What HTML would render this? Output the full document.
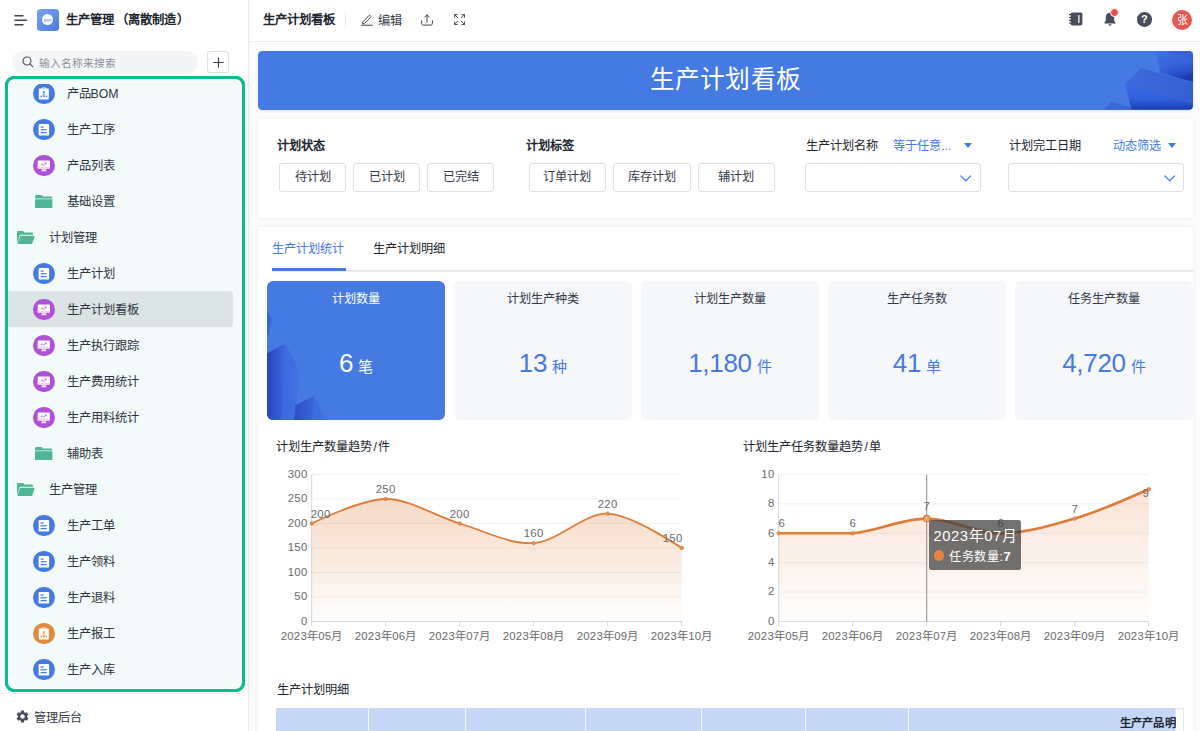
<!DOCTYPE html>
<html lang="zh-CN"><head><meta charset="utf-8"><title>生产计划看板</title>
<style>
*{box-sizing:border-box;margin:0;padding:0}
html,body{width:1200px;height:731px;overflow:hidden;background:#fff}
body{font-family:"Liberation Sans",sans-serif;font-size:12px;color:#2d3440;position:relative}
.abs{position:absolute}
.t{position:absolute;white-space:nowrap;line-height:16px;height:16px;text-align:justify;text-align-last:justify}
.jc{display:inline-block;white-space:nowrap;text-align:justify;text-align-last:justify;vertical-align:top}
#side{position:absolute;left:0;top:0;width:249px;height:731px;background:#fff;border-right:1px solid #e6e8ec}
#main{position:absolute;left:249px;top:0;width:951px;height:731px;background:#fcfcfd;overflow:hidden}
#topbar{position:absolute;left:0;top:0;width:951px;height:41.600px;background:#fff;border-bottom:1px solid #ececef}
.card{position:absolute;background:#fff;box-shadow:0 0 5px rgba(40,50,90,.09)}
.btn{position:absolute;top:163px;height:28.5px;border:1px solid #dde0e6;border-radius:3px;background:#fff;text-align:center;line-height:27px;font-size:12.2px;color:#333a46;white-space:nowrap;overflow:hidden}
.sel{position:absolute;top:163.300px;height:29px;width:175.500px;border:1px solid #dcdfe5;border-radius:3px;background:#fff}
.kpi{position:absolute;top:280.5px;width:178px;height:139px;border-radius:6px;background:#f6f7fb;overflow:hidden}
.kpi .h{position:absolute;left:0;top:10.300px;width:178px;text-align:center;font-size:12.2px;line-height:16px;white-space:nowrap;color:#333a46}
.kpi .n{position:absolute;left:0;top:63.800px;width:178px;height:38px;text-align:center;white-space:nowrap;color:#447ae1;line-height:38px;font-size:26px;letter-spacing:-.3px}
.kpi .n small{display:inline-block;width:15px;text-align:center;font-size:15px;margin-left:5px;letter-spacing:0}
.item{position:absolute;left:0;width:248px;height:36px}
.item .lb{position:absolute;top:11px;line-height:16px;height:16px;font-size:12.3px;white-space:nowrap;color:#2d3440;text-align:justify;text-align-last:justify}
.ic{position:absolute;left:33.3px;top:7.5px;width:21.6px;height:21.6px;border-radius:50%}
</style></head>
<body>
<div id="side">
<svg class="abs" style="left:14px;top:13.5px" width="14" height="12" viewBox="0 0 14 12"><path d="M1 1.700h8M1 6.200h11.600M1 10.700h8" stroke="#3c4250" stroke-width="1.400" stroke-linecap="round" fill="none"/></svg>
<div class="abs" style="left:37px;top:9px;width:21.5px;height:21.5px;border-radius:3.5px;background:linear-gradient(135deg,#7aa2ee 0%,#4a7de2 100%)"><div class="abs" style="left:5.200px;top:5.200px;width:11px;height:11px;border-radius:50%;background:#fff"></div><div class="abs" style="left:5.200px;top:8.600px;width:11px;height:5px;line-height:5px;font-size:4px;font-weight:bold;color:#8fb0ef;text-align:center;letter-spacing:-.1px">ERP</div></div>
<div class="t" style="width:123.55px;left:65.500px;top:12.400px;font-size:12.300px;font-weight:bold;color:#20252e">生产管理<span style="margin-left:2px">（</span>离散制造<span style="margin-left:1.500px">）</span></div>
<div class="abs" style="left:12px;top:50.500px;width:186px;height:23px;border-radius:11.500px;background:#f4f5f7"></div>
<svg class="abs" style="left:21.700px;top:56px" width="12" height="12" viewBox="0 0 13 13"><circle cx="5.400" cy="5.400" r="4.300" stroke="#4a505c" stroke-width="1.200" fill="none"/><path d="M8.600 8.600l3.200 3.200" stroke="#4a505c" stroke-width="1.200" stroke-linecap="round"/></svg>
<div class="t" style="width:77.05px;left:38.800px;top:55px;font-size:10.700px;color:#8a8f99">输入名称来搜索</div>
<div class="abs" style="left:207px;top:51px;width:21.500px;height:22px;border:1px solid #dcdfe4;border-radius:3px;background:#fff"></div>
<svg class="abs" style="left:212.500px;top:56.500px" width="11" height="11" viewBox="0 0 11 11"><path d="M5.500 .8v9.400M.8 5.500h9.400" stroke="#3c4250" stroke-width="1.200" stroke-linecap="round"/></svg>
<div class="abs" style="left:5px;top:76px;width:239.800px;height:616.200px;border:3px solid #09bd8e;border-radius:9px;background:#fbfefd"></div>
<div class="abs" style="left:9.500px;top:80.600px;width:230.800px;height:607px;border-radius:5px;background:#f2fbf9"></div>
<div class="item" style="top:75.3px"><svg class="ic" viewBox="0 0 22 22" style="background:#447ae1"><rect x="5.900" y="5.500" width="10.200" height="11.300" rx="1" fill="#fff"/><rect x="8.800" y="4.500" width="4.400" height="1.800" rx=".6" fill="#fff"/><rect x="9.500" y="5.300" width="3" height=".8" rx=".3" fill="#447ae1" opacity=".5"/><rect x="10.100" y="8.300" width="1.800" height="1.800" rx=".3" fill="#447ae1"/><path d="M11 10l-2.600 3.600h5.200z" fill="#447ae1" opacity=".35"/><path d="M11 10v3.600" stroke="#447ae1" stroke-width=".8" opacity=".6"/><rect x="7.600" y="13.100" width="1.500" height="1.500" rx=".3" fill="#447ae1"/><rect x="10.250" y="13.100" width="1.500" height="1.500" rx=".3" fill="#447ae1"/><rect x="12.900" y="13.100" width="1.500" height="1.500" rx=".3" fill="#447ae1"/></svg><div class="lb" style="width:52.07px;left:66.500px">产品BOM</div></div>
<div class="item" style="top:111.3px"><svg class="ic" viewBox="0 0 22 22" style="background:#447ae1"><rect x="5.700" y="5" width="10.700" height="11.700" rx="1.200" fill="#fff"/><rect x="7.700" y="7.600" width="3.100" height="1.250" fill="#447ae1"/><rect x="7.700" y="10.400" width="6.300" height="1.250" fill="#447ae1"/><rect x="7.700" y="13.200" width="6.300" height="1.250" fill="#447ae1"/></svg><div class="lb" style="width:48.05px;left:66.500px">生产工序</div></div>
<div class="item" style="top:147.3px"><svg class="ic" viewBox="0 0 22 22" style="background:#b04fd8"><rect x="4.800" y="5.600" width="12.400" height="8.400" rx=".9" fill="#fff"/><rect x="4.800" y="12" width="12.400" height="2" fill="#ecd3f6"/><path d="M9.300 14h3.400l.5 1.600H8.800z" fill="#ecd3f6"/><rect x="8.300" y="15.500" width="5.400" height="1" rx=".3" fill="#fff"/><path d="M8 10.300c.8-1.300 1.500-1.300 2.100-.5s1.400.6 2.300-.9" stroke="#b04fd8" stroke-width=".9" fill="none"/><circle cx="13" cy="8.500" r=".9" fill="#b04fd8"/></svg><div class="lb" style="width:48.05px;left:66.500px">产品列表</div></div>
<div class="item" style="top:183.3px"><svg class="abs" style="left:35.400px;top:11.600px" width="17.400" height="13.600" viewBox="0 0 17.4 13.6"><path d="M1.500 0h4.600c.5 0 .9.200 1.200.6l.7.900h7.900c.8 0 1.500.7 1.500 1.500v.5H0v-2C0 .7.700 0 1.500 0z" fill="#4fb595"/><path d="M0 4.300h17.400v7.600c0 .9-.8 1.700-1.700 1.700H1.700c-.9 0-1.700-.8-1.700-1.700z" fill="#4fb595"/></svg><div class="lb" style="width:48.05px;left:66.500px">基础设置</div></div>
<div class="item" style="top:219.3px"><svg class="abs" style="left:17.4px;top:12px" width="17.4" height="13" viewBox="0 0 17.4 13"><path d="M1.3 0h4.2c.5 0 .9.2 1.200.6l.6.8h7.400c.7 0 1.300.6 1.300 1.300v1.100H3.900c-.7 0-1.300.4-1.500 1.100L.3 11.500C.1 11.300 0 11 0 10.700V1.300C0 .6.6 0 1.300 0z" fill="#4fb595"/><path d="M4.200 4.700h12.300c.7 0 1.100.6.900 1.200l-2 6.100c-.2.600-.7 1-1.300 1H1.500c-.6 0-1-.5-.8-1.100l2.100-6.200c.2-.6.700-1 1.400-1z" fill="#4fb595"/></svg><div class="lb" style="width:48.05px;left:49px">计划管理</div></div>
<div class="item" style="top:255.3px"><svg class="ic" viewBox="0 0 22 22" style="background:#447ae1"><rect x="5.700" y="5" width="10.700" height="11.700" rx="1.200" fill="#fff"/><rect x="7.700" y="7.600" width="3.100" height="1.250" fill="#447ae1"/><rect x="7.700" y="10.400" width="6.300" height="1.250" fill="#447ae1"/><rect x="7.700" y="13.200" width="6.300" height="1.250" fill="#447ae1"/></svg><div class="lb" style="width:48.05px;left:66.500px">生产计划</div></div>
<div class="abs" style="left:8px;top:291.0px;width:225px;height:36px;background:#dbe4e4;border-radius:0 4px 4px 0"></div><div class="item" style="top:291.3px"><svg class="ic" viewBox="0 0 22 22" style="background:#b04fd8"><rect x="4.800" y="5.600" width="12.400" height="8.400" rx=".9" fill="#fff"/><rect x="4.800" y="12" width="12.400" height="2" fill="#ecd3f6"/><path d="M9.300 14h3.400l.5 1.600H8.800z" fill="#ecd3f6"/><rect x="8.300" y="15.500" width="5.400" height="1" rx=".3" fill="#fff"/><path d="M8 10.300c.8-1.300 1.500-1.300 2.100-.5s1.400.6 2.300-.9" stroke="#b04fd8" stroke-width=".9" fill="none"/><circle cx="13" cy="8.500" r=".9" fill="#b04fd8"/></svg><div class="lb" style="width:72.05px;left:66.500px">生产计划看板</div></div>
<div class="item" style="top:327.3px"><svg class="ic" viewBox="0 0 22 22" style="background:#b04fd8"><rect x="4.800" y="5.600" width="12.400" height="8.400" rx=".9" fill="#fff"/><rect x="4.800" y="12" width="12.400" height="2" fill="#ecd3f6"/><path d="M9.300 14h3.400l.5 1.600H8.800z" fill="#ecd3f6"/><rect x="8.300" y="15.500" width="5.400" height="1" rx=".3" fill="#fff"/><path d="M8 10.300c.8-1.300 1.500-1.300 2.100-.5s1.400.6 2.300-.9" stroke="#b04fd8" stroke-width=".9" fill="none"/><circle cx="13" cy="8.500" r=".9" fill="#b04fd8"/></svg><div class="lb" style="width:72.05px;left:66.500px">生产执行跟踪</div></div>
<div class="item" style="top:363.3px"><svg class="ic" viewBox="0 0 22 22" style="background:#b04fd8"><rect x="4.800" y="5.600" width="12.400" height="8.400" rx=".9" fill="#fff"/><rect x="4.800" y="12" width="12.400" height="2" fill="#ecd3f6"/><path d="M9.300 14h3.400l.5 1.600H8.800z" fill="#ecd3f6"/><rect x="8.300" y="15.500" width="5.400" height="1" rx=".3" fill="#fff"/><path d="M8 10.300c.8-1.300 1.500-1.300 2.100-.5s1.400.6 2.300-.9" stroke="#b04fd8" stroke-width=".9" fill="none"/><circle cx="13" cy="8.500" r=".9" fill="#b04fd8"/></svg><div class="lb" style="width:72.05px;left:66.500px">生产费用统计</div></div>
<div class="item" style="top:399.3px"><svg class="ic" viewBox="0 0 22 22" style="background:#b04fd8"><rect x="4.800" y="5.600" width="12.400" height="8.400" rx=".9" fill="#fff"/><rect x="4.800" y="12" width="12.400" height="2" fill="#ecd3f6"/><path d="M9.300 14h3.400l.5 1.600H8.800z" fill="#ecd3f6"/><rect x="8.300" y="15.500" width="5.400" height="1" rx=".3" fill="#fff"/><path d="M8 10.300c.8-1.300 1.500-1.300 2.100-.5s1.400.6 2.300-.9" stroke="#b04fd8" stroke-width=".9" fill="none"/><circle cx="13" cy="8.500" r=".9" fill="#b04fd8"/></svg><div class="lb" style="width:72.05px;left:66.500px">生产用料统计</div></div>
<div class="item" style="top:435.3px"><svg class="abs" style="left:35.400px;top:11.600px" width="17.400" height="13.600" viewBox="0 0 17.4 13.6"><path d="M1.500 0h4.600c.5 0 .9.200 1.200.6l.7.900h7.900c.8 0 1.500.7 1.500 1.500v.5H0v-2C0 .7.700 0 1.500 0z" fill="#4fb595"/><path d="M0 4.300h17.400v7.600c0 .9-.8 1.700-1.700 1.700H1.700c-.9 0-1.700-.8-1.700-1.700z" fill="#4fb595"/></svg><div class="lb" style="width:36.05px;left:66.500px">辅助表</div></div>
<div class="item" style="top:471.3px"><svg class="abs" style="left:17.4px;top:12px" width="17.4" height="13" viewBox="0 0 17.4 13"><path d="M1.3 0h4.2c.5 0 .9.2 1.200.6l.6.8h7.400c.7 0 1.300.6 1.300 1.300v1.100H3.900c-.7 0-1.300.4-1.500 1.100L.3 11.500C.1 11.300 0 11 0 10.700V1.300C0 .6.6 0 1.300 0z" fill="#4fb595"/><path d="M4.200 4.700h12.300c.7 0 1.100.6.900 1.200l-2 6.100c-.2.600-.7 1-1.300 1H1.500c-.6 0-1-.5-.8-1.100l2.100-6.200c.2-.6.700-1 1.400-1z" fill="#4fb595"/></svg><div class="lb" style="width:48.05px;left:49px">生产管理</div></div>
<div class="item" style="top:507.3px"><svg class="ic" viewBox="0 0 22 22" style="background:#447ae1"><rect x="5.700" y="5" width="10.700" height="11.700" rx="1.200" fill="#fff"/><rect x="7.700" y="7.600" width="3.100" height="1.250" fill="#447ae1"/><rect x="7.700" y="10.400" width="6.300" height="1.250" fill="#447ae1"/><rect x="7.700" y="13.200" width="6.300" height="1.250" fill="#447ae1"/></svg><div class="lb" style="width:48.05px;left:66.500px">生产工单</div></div>
<div class="item" style="top:543.3px"><svg class="ic" viewBox="0 0 22 22" style="background:#447ae1"><rect x="5.700" y="5" width="10.700" height="11.700" rx="1.200" fill="#fff"/><rect x="7.700" y="7.600" width="3.100" height="1.250" fill="#447ae1"/><rect x="7.700" y="10.400" width="6.300" height="1.250" fill="#447ae1"/><rect x="7.700" y="13.200" width="6.300" height="1.250" fill="#447ae1"/></svg><div class="lb" style="width:48.05px;left:66.500px">生产领料</div></div>
<div class="item" style="top:579.3px"><svg class="ic" viewBox="0 0 22 22" style="background:#447ae1"><rect x="5.700" y="5" width="10.700" height="11.700" rx="1.200" fill="#fff"/><rect x="7.700" y="7.600" width="3.100" height="1.250" fill="#447ae1"/><rect x="7.700" y="10.400" width="6.300" height="1.250" fill="#447ae1"/><rect x="7.700" y="13.200" width="6.300" height="1.250" fill="#447ae1"/></svg><div class="lb" style="width:48.05px;left:66.500px">生产退料</div></div>
<div class="item" style="top:615.3px"><svg class="ic" viewBox="0 0 22 22" style="background:#e08b3d"><rect x="5.900" y="5.500" width="10.200" height="11.300" rx="1" fill="#fff"/><rect x="8.800" y="4.500" width="4.400" height="1.800" rx=".6" fill="#fff"/><rect x="9.500" y="5.300" width="3" height=".8" rx=".3" fill="#e08b3d" opacity=".5"/><rect x="10.100" y="8.300" width="1.800" height="1.800" rx=".3" fill="#e08b3d"/><path d="M11 10l-2.600 3.600h5.200z" fill="#e08b3d" opacity=".35"/><path d="M11 10v3.600" stroke="#e08b3d" stroke-width=".8" opacity=".6"/><rect x="7.600" y="13.100" width="1.500" height="1.500" rx=".3" fill="#e08b3d"/><rect x="10.250" y="13.100" width="1.500" height="1.500" rx=".3" fill="#e08b3d"/><rect x="12.900" y="13.100" width="1.500" height="1.500" rx=".3" fill="#e08b3d"/></svg><div class="lb" style="width:48.05px;left:66.500px">生产报工</div></div>
<div class="item" style="top:651.3px"><svg class="ic" viewBox="0 0 22 22" style="background:#447ae1"><rect x="5.700" y="5" width="10.700" height="11.700" rx="1.200" fill="#fff"/><rect x="7.700" y="7.600" width="3.100" height="1.250" fill="#447ae1"/><rect x="7.700" y="10.400" width="6.300" height="1.250" fill="#447ae1"/><rect x="7.700" y="13.200" width="6.300" height="1.250" fill="#447ae1"/></svg><div class="lb" style="width:48.05px;left:66.500px">生产入库</div></div>
<div class="abs" style="left:9.500px;top:80.600px;width:230.800px;height:3.600px;background:#f2fbf9;border-radius:5px 5px 0 0"></div>
<div class="abs" style="left:5px;top:76px;width:239.800px;height:616.200px;border:3px solid #09bd8e;border-radius:9px"></div>
<div class="abs" style="left:0;top:693px;width:248px;height:1px;background:#ebecef"></div>
<svg class="abs" style="left:15px;top:708.800px" width="15" height="15" viewBox="0 0 24 24"><path fill="#474d59" d="M19.140 12.940c.040-.3.060-.610.060-.940 0-.320-.020-.640-.070-.940l2.030-1.580a.490.490 0 0 0 .120-.610l-1.920-3.320a.488.488 0 0 0-.590-.220l-2.390.960c-.5-.380-1.030-.7-1.620-.940l-.360-2.540a.484.484 0 0 0-.480-.410h-3.840c-.240 0-.430.170-.470.410l-.360 2.540c-.590.240-1.130.570-1.620.940l-2.390-.960c-.220-.080-.470 0-.590.220L2.740 8.870c-.120.210-.080.470.120.610l2.030 1.580c-.050.300-.090.630-.090.940s.020.640.070.940l-2.030 1.580a.490.490 0 0 0-.120.610l1.920 3.320c.120.220.370.290.590.220l2.390-.960c.5.380 1.030.7 1.620.940l.360 2.540c.050.240.240.410.480.410h3.840c.240 0 .440-.170.470-.410l.360-2.540c.590-.240 1.130-.560 1.620-.940l2.390.960c.220.080.470 0 .590-.220l1.920-3.320c.120-.220.070-.470-.120-.610l-2.010-1.580zM12 15.600c-1.980 0-3.600-1.620-3.600-3.600s1.620-3.600 3.600-3.600 3.600 1.620 3.600 3.600-1.620 3.600-3.600 3.600z"/></svg>
<div class="t" style="width:48.05px;left:34px;top:709.600px;font-size:12.200px;color:#333a46">管理后台</div>
</div>
<div id="main">
<div id="topbar"></div>
<div class="t" style="width:72.05px;left:14.2px;top:12px;font-size:12.400px;font-weight:bold;color:#20252e">生产计划看板</div>
<div class="abs" style="left:96.0px;top:12px;width:1px;height:16px;background:#e8eaed"></div>
<svg class="abs" style="left:111.5px;top:13.500px" width="12" height="12" viewBox="0 0 12 12"><path d="M1.800 7.900L8 1.500a.800.800 0 0 1 1.150 0l.55.550a.800.800 0 0 1 0 1.150L3.500 9.500l-2 .3z" stroke="#3c4250" stroke-width=".95" fill="none" stroke-linejoin="round"/><path d="M.5 11.200h10.800" stroke="#3c4250" stroke-width="1" stroke-linecap="round"/></svg>
<div class="t" style="width:24.05px;left:129.3px;top:12.700px;font-size:12.200px;color:#333a46">编辑</div>
<svg class="abs" style="left:172.2px;top:13.800px" width="12" height="12" viewBox="0 0 12 12"><path d="M.6 6.800v2.600c0 1 .7 1.700 1.700 1.700h7.400c1 0 1.700-.7 1.700-1.700V6.800M6 8.200V1M3.700 3.100L6 .8l2.300 2.300" stroke="#3c4250" stroke-width="1" fill="none" stroke-linecap="round" stroke-linejoin="round"/></svg>
<svg class="abs" style="left:204.6px;top:14px" width="11.200" height="11.200" viewBox="0 0 12 12"><path d="M.7 3.600V.7h2.900M.9.900l3.300 3.300M8.400.7h2.900v2.900M11.100.9L7.800 4.200M11.300 8.400v2.900H8.400M11.100 11.100L7.800 7.800M3.600 11.300H.7V8.400M.9 11.100l3.300-3.300" stroke="#3c4250" stroke-width="1" fill="none" stroke-linecap="round" stroke-linejoin="round"/></svg>
<svg class="abs" style="left:820.0px;top:12.100px" width="14" height="14" viewBox="0 0 14 14"><rect x="1.600" y=".4" width="11.800" height="13.200" rx="1.800" fill="#474d59"/><rect x="9.200" y="3" width="1.300" height="8" rx=".4" fill="#fff"/><path d="M.3 2.600h2M.3 5.500h2M.3 8.400h2M.3 11.300h2" stroke="#474d59" stroke-width="1.100" stroke-linecap="round"/></svg>
<svg class="abs" style="left:855.3px;top:12.200px" width="12" height="14.500" viewBox="0 0 12 14.500"><path d="M6 .8c-2.500 0-4.200 1.900-4.200 4.400v3.600L.5 10.600v.8h11v-.8l-1.300-1.800V5.200C10.200 2.700 8.500.8 6 .8z" fill="#474d59"/><path d="M4.500 12.200a1.500 1.500 0 0 0 3 0z" fill="#474d59"/></svg>
<div class="abs" style="left:861.2px;top:8.400px;width:8.800px;height:8.800px;border-radius:50%;background:#e8524a;border:1px solid #fff"></div>
<div class="abs" style="left:888.0px;top:12.100px;width:14.600px;height:14.600px;border-radius:50%;background:#474d59;color:#fff;font-size:11px;font-weight:bold;text-align:center;line-height:15px">?</div>
<div class="abs" style="left:923.0px;top:9.700px;width:20px;height:20px;border-radius:50%;background:#e5574f;color:#fff;font-size:11px;text-align:center;line-height:20px;overflow:hidden">张</div>
<div class="abs" style="left:9.0px;top:51px;width:935px;height:58.500px;border-radius:4.500px;background:#447ae1;overflow:hidden;box-shadow:0 1px 3px rgba(40,60,110,.12)"><svg class="abs" style="right:0;top:0" width="120" height="58.500" viewBox="0 0 120 58.500"><defs><linearGradient id="bg1" gradientUnits="userSpaceOnUse" x1="96" y1="0" x2="104" y2="29"><stop offset="0" stop-color="#3e6fe2"/><stop offset=".55" stop-color="#3461d8"/><stop offset=".88" stop-color="#2549c2"/><stop offset="1" stop-color="#1b3aac"/></linearGradient><linearGradient id="bg2" x1="0" y1="0" x2="0" y2="1"><stop offset="0" stop-color="#3a6be4"/><stop offset=".6" stop-color="#2f5fdc"/><stop offset=".9" stop-color="#2246c0"/><stop offset="1" stop-color="#1b3bb0"/></linearGradient><linearGradient id="bg3" x1="0" y1="0" x2="1" y2="0"><stop offset="0" stop-color="#3b6adb"/><stop offset="1" stop-color="#3560d2"/></linearGradient></defs><path d="M82.600 0H120V31L87.400 21.800z" fill="url(#bg1)"/><path d="M93 0h27v8.300z" fill="#3560d0" opacity=".75"/><path d="M68.200 17L120 31.800V52.400L52 33.300z" fill="url(#bg3)"/><path d="M52 33.300L120 52.400V58.500H58.500z" fill="url(#bg2)"/><path d="M38.500 50.500L58.200 56.200l.5 2.300H31z" fill="#3a68d7"/></svg><div class="abs" style="left:0;top:12.200px;width:935px;text-align:center;font-size:24.800px;line-height:34px;color:#fff;white-space:nowrap"><span class="jc" style="width:151.86px;letter-spacing:.3px">生产计划看板</span></div></div>
<div class="card" style="left:9.0px;top:118.500px;width:934.500px;height:99.500px"></div>
<div class="t" style="width:48.05px;left:27.5px;top:137.500px;font-size:12.200px;font-weight:bold;color:#20252e">计划状态</div>
<div class="btn" style="left:30.1px;width:66.900px"><span class="jc" style="width:36.05px;">待计划</span></div>
<div class="btn" style="left:104.1px;width:66.900px"><span class="jc" style="width:36.05px;">已计划</span></div>
<div class="btn" style="left:178.1px;width:66.900px"><span class="jc" style="width:36.05px;">已完结</span></div>
<div class="t" style="width:48.05px;left:276.5px;top:137.500px;font-size:12.200px;font-weight:bold;color:#20252e">计划标签</div>
<div class="btn" style="left:279.5px;width:77.500px"><span class="jc" style="width:48.05px;">订单计划</span></div>
<div class="btn" style="left:364.1px;width:77.500px"><span class="jc" style="width:48.05px;">库存计划</span></div>
<div class="btn" style="left:448.7px;width:77.500px"><span class="jc" style="width:36.05px;">辅计划</span></div>
<div class="t" style="width:72.05px;left:557.0px;top:137.500px;font-size:12.200px;color:#20252e">生产计划名称</div>
<div class="t" style="width:58.22px;left:644.3px;top:137.500px;font-size:12.200px;color:#447ae1">等于任意...</div>
<div class="abs" style="left:715.1px;top:143.400px;border:4.900px solid transparent;border-top:5.800px solid #447ae1;border-bottom:0"></div>
<div class="sel" style="left:556.3px"></div>
<svg class="abs" style="left:710.7px;top:175.300px" width="11.500" height="7" viewBox="0 0 11.500 7"><path d="M.8.900l4.950 4.900L10.700.9" stroke="#447ae1" stroke-width="1.200" fill="none" stroke-linecap="round" stroke-linejoin="round"/></svg>
<div class="t" style="width:72.05px;left:760.0px;top:137.500px;font-size:12.200px;color:#20252e">计划完工日期</div>
<div class="t" style="width:48.05px;left:863.5px;top:137.500px;font-size:12.200px;color:#447ae1">动态筛选</div>
<div class="abs" style="left:918.6px;top:143.400px;border:4.900px solid transparent;border-top:5.800px solid #447ae1;border-bottom:0"></div>
<div class="sel" style="left:759.3px"></div>
<svg class="abs" style="left:914.7px;top:175.300px" width="11.500" height="7" viewBox="0 0 11.500 7"><path d="M.8.900l4.950 4.900L10.700.9" stroke="#447ae1" stroke-width="1.200" fill="none" stroke-linecap="round" stroke-linejoin="round"/></svg>
<div class="card" style="left:9.0px;top:226.500px;width:934.500px;height:520px"></div>
<div class="t" style="width:72.05px;left:23.0px;top:241px;font-size:12.200px;color:#447ae1">生产计划统计</div>
<div class="t" style="width:72.05px;left:124.0px;top:241px;font-size:12.200px;color:#20252e">生产计划明细</div>
<div class="abs" style="left:23.0px;top:270.300px;width:921px;height:1.300px;background:#e9eaee"></div>
<div class="abs" style="left:23.0px;top:268.300px;width:74px;height:2.800px;background:#447ae1"></div>
<div class="kpi" style="left:18.0px;background:#447ae1"><svg class="abs" style="left:0;top:0" width="178" height="139" viewBox="0 0 178 139"><defs><linearGradient id="kg1" x1="0" y1="0" x2="1" y2="0"><stop offset="0" stop-color="#2646be"/><stop offset="1" stop-color="#3b69dc"/></linearGradient><linearGradient id="kg3" x1="0" y1="0" x2="1" y2="0"><stop offset="0" stop-color="#2a4cc4"/><stop offset="1" stop-color="#3a66da"/></linearGradient><linearGradient id="kg2" x1="0" y1="0" x2="1" y2="0"><stop offset="0" stop-color="#3b6bde"/><stop offset="1" stop-color="#4072e0"/></linearGradient></defs><path d="M0 29l4.500 8.700L1.800 53.700H0z" fill="#3864d6"/><path d="M0 72.200L18.300 62.400 15.200 139H0z" fill="url(#kg1)"/><path d="M18.300 62.400L32.200 89.600 28.500 139H15.200z" fill="url(#kg2)"/><path d="M28.500 123.900L47 114.900 45.500 139H27.400z" fill="url(#kg3)"/><path d="M47 114.900L59.300 139H45.500z" fill="url(#kg2)"/></svg><div class="h" style="color:#fff"><span class="jc" style="width:48.05px;">计划数量</span></div><div class="n" style="color:#fff">6<small>笔</small></div></div>
<div class="kpi" style="left:205.0px"><div class="h"><span class="jc" style="width:72.05px;">计划生产种类</span></div><div class="n">13<small>种</small></div></div>
<div class="kpi" style="left:392.0px"><div class="h"><span class="jc" style="width:72.05px;">计划生产数量</span></div><div class="n">1,180<small>件</small></div></div>
<div class="kpi" style="left:579.0px"><div class="h"><span class="jc" style="width:60.05px;">生产任务数</span></div><div class="n">41<small>单</small></div></div>
<div class="kpi" style="left:766.0px"><div class="h"><span class="jc" style="width:72.05px;">任务生产数量</span></div><div class="n">4,720<small>件</small></div></div>
<div class="t" style="width:114.22px;left:27.0px;top:439px;font-size:12.200px;color:#20252e">计划生产数量趋势<span style="margin:0 1.400px">/</span>件</div>
<svg class="abs" style="left:0;top:0" width="951" height="731" viewBox="249 0 951 731" font-family="Liberation Sans, sans-serif"><defs><linearGradient id="ga" x1="0" y1="0" x2="0" y2="1"><stop offset="0" stop-color="#df7b37" stop-opacity=".29"/><stop offset="1" stop-color="#df7b37" stop-opacity=".012"/></linearGradient></defs><text x="307.6" y="624.7" text-anchor="end" font-size="11.400" fill="#6a6a6a" letter-spacing=".3">0</text><path d="M311.7 597.0H681.7" stroke="#f1f1f1" stroke-width="1"/><text x="307.6" y="600.2" text-anchor="end" font-size="11.400" fill="#6a6a6a" letter-spacing=".3">50</text><path d="M311.7 572.5H681.7" stroke="#f1f1f1" stroke-width="1"/><text x="307.6" y="575.7" text-anchor="end" font-size="11.400" fill="#6a6a6a" letter-spacing=".3">100</text><path d="M311.7 548.0H681.7" stroke="#f1f1f1" stroke-width="1"/><text x="307.6" y="551.2" text-anchor="end" font-size="11.400" fill="#6a6a6a" letter-spacing=".3">150</text><path d="M311.7 523.5H681.7" stroke="#f1f1f1" stroke-width="1"/><text x="307.6" y="526.7" text-anchor="end" font-size="11.400" fill="#6a6a6a" letter-spacing=".3">200</text><path d="M311.7 499.0H681.7" stroke="#f1f1f1" stroke-width="1"/><text x="307.6" y="502.2" text-anchor="end" font-size="11.400" fill="#6a6a6a" letter-spacing=".3">250</text><path d="M311.7 474.5H681.7" stroke="#f1f1f1" stroke-width="1"/><text x="307.6" y="477.7" text-anchor="end" font-size="11.400" fill="#6a6a6a" letter-spacing=".3">300</text><path d="M311.70 523.50 C311.70 523.50 361.28 499.00 385.70 499.00 C410.12 499.00 435.06 516.16 459.70 523.50 C483.90 530.71 509.76 544.69 533.70 543.10 C558.60 541.45 583.57 512.90 607.70 513.70 C632.41 514.52 681.70 548.00 681.70 548.00 L681.7 621.5 L311.7 621.5 Z" fill="url(#ga)"/><path d="M311.7 474.5V621.5" stroke="#d6d7d9" stroke-width="1"/><path d="M311.7 621.5H681.7" stroke="#d6d7d9" stroke-width="1"/><path d="M311.7 621.5v4.500" stroke="#d6d7d9" stroke-width="1"/><text x="311.7" y="639.9" text-anchor="middle" font-size="11.400" fill="#6a6a6a" letter-spacing=".25" textLength="62.02" lengthAdjust="spacing">2023年05月</text><path d="M385.7 621.5v4.500" stroke="#d6d7d9" stroke-width="1"/><text x="385.7" y="639.9" text-anchor="middle" font-size="11.400" fill="#6a6a6a" letter-spacing=".25" textLength="62.02" lengthAdjust="spacing">2023年06月</text><path d="M459.7 621.5v4.500" stroke="#d6d7d9" stroke-width="1"/><text x="459.7" y="639.9" text-anchor="middle" font-size="11.400" fill="#6a6a6a" letter-spacing=".25" textLength="62.02" lengthAdjust="spacing">2023年07月</text><path d="M533.7 621.5v4.500" stroke="#d6d7d9" stroke-width="1"/><text x="533.7" y="639.9" text-anchor="middle" font-size="11.400" fill="#6a6a6a" letter-spacing=".25" textLength="62.02" lengthAdjust="spacing">2023年08月</text><path d="M607.7 621.5v4.500" stroke="#d6d7d9" stroke-width="1"/><text x="607.7" y="639.9" text-anchor="middle" font-size="11.400" fill="#6a6a6a" letter-spacing=".25" textLength="62.02" lengthAdjust="spacing">2023年09月</text><path d="M681.7 621.5v4.500" stroke="#d6d7d9" stroke-width="1"/><text x="681.7" y="639.9" text-anchor="middle" font-size="11.400" fill="#6a6a6a" letter-spacing=".25" textLength="62.02" lengthAdjust="spacing">2023年10月</text><path d="M311.70 523.50 C311.70 523.50 361.28 499.00 385.70 499.00 C410.12 499.00 435.06 516.16 459.70 523.50 C483.90 530.71 509.76 544.69 533.70 543.10 C558.60 541.45 583.57 512.90 607.70 513.70 C632.41 514.52 681.70 548.00 681.70 548.00" stroke="#df7b37" stroke-width="1.8" fill="none" stroke-linejoin="round"/><circle cx="311.7" cy="523.5" r="1.700" fill="#e8935a" stroke="#df7b37" stroke-width=".9"/><text x="320.7" y="517.5" text-anchor="middle" font-size="11.400" fill="#6a6a6a" letter-spacing=".3">200</text><circle cx="385.7" cy="499.0" r="1.700" fill="#e8935a" stroke="#df7b37" stroke-width=".9"/><text x="385.7" y="493.0" text-anchor="middle" font-size="11.400" fill="#6a6a6a" letter-spacing=".3">250</text><circle cx="459.7" cy="523.5" r="1.700" fill="#e8935a" stroke="#df7b37" stroke-width=".9"/><text x="459.7" y="517.5" text-anchor="middle" font-size="11.400" fill="#6a6a6a" letter-spacing=".3">200</text><circle cx="533.7" cy="543.1" r="1.700" fill="#e8935a" stroke="#df7b37" stroke-width=".9"/><text x="533.7" y="537.1" text-anchor="middle" font-size="11.400" fill="#6a6a6a" letter-spacing=".3">160</text><circle cx="607.7" cy="513.7" r="1.700" fill="#e8935a" stroke="#df7b37" stroke-width=".9"/><text x="607.7" y="507.7" text-anchor="middle" font-size="11.400" fill="#6a6a6a" letter-spacing=".3">220</text><circle cx="681.7" cy="548.0" r="1.700" fill="#e8935a" stroke="#df7b37" stroke-width=".9"/><text x="672.7" y="542.0" text-anchor="middle" font-size="11.400" fill="#6a6a6a" letter-spacing=".3">150</text></svg>
<div class="t" style="width:138.22px;left:494.0px;top:439px;font-size:12.200px;color:#20252e">计划生产任务数量趋势<span style="margin:0 1.400px">/</span>单</div>
<svg class="abs" style="left:0;top:0" width="951" height="731" viewBox="249 0 951 731" font-family="Liberation Sans, sans-serif"><defs><linearGradient id="gb" x1="0" y1="0" x2="0" y2="1"><stop offset="0" stop-color="#df7b37" stop-opacity=".21"/><stop offset="1" stop-color="#df7b37" stop-opacity=".012"/></linearGradient></defs><text x="774.6" y="624.7" text-anchor="end" font-size="11.400" fill="#6a6a6a" letter-spacing=".3">0</text><path d="M778.7 592.1H1148.7" stroke="#f1f1f1" stroke-width="1"/><text x="774.6" y="595.3" text-anchor="end" font-size="11.400" fill="#6a6a6a" letter-spacing=".3">2</text><path d="M778.7 562.7H1148.7" stroke="#f1f1f1" stroke-width="1"/><text x="774.6" y="565.9" text-anchor="end" font-size="11.400" fill="#6a6a6a" letter-spacing=".3">4</text><path d="M778.7 533.3H1148.7" stroke="#f1f1f1" stroke-width="1"/><text x="774.6" y="536.5" text-anchor="end" font-size="11.400" fill="#6a6a6a" letter-spacing=".3">6</text><path d="M778.7 503.9H1148.7" stroke="#f1f1f1" stroke-width="1"/><text x="774.6" y="507.1" text-anchor="end" font-size="11.400" fill="#6a6a6a" letter-spacing=".3">8</text><path d="M778.7 474.5H1148.7" stroke="#f1f1f1" stroke-width="1"/><text x="774.6" y="477.7" text-anchor="end" font-size="11.400" fill="#6a6a6a" letter-spacing=".3">10</text><path d="M778.70 533.30 C778.70 533.30 828.52 533.30 852.70 533.30 C877.36 530.85 902.28 518.60 926.70 518.60 C951.12 518.60 976.28 533.30 1000.70 533.30 C1025.12 533.30 1050.94 525.68 1074.70 518.60 C1099.78 511.13 1148.70 489.20 1148.70 489.20 L1148.7 621.5 L778.7 621.5 Z" fill="url(#gb)"/><path d="M778.7 474.5V621.5" stroke="#d6d7d9" stroke-width="1"/><path d="M778.7 621.5H1148.7" stroke="#d6d7d9" stroke-width="1"/><path d="M778.7 621.5v4.500" stroke="#d6d7d9" stroke-width="1"/><text x="778.7" y="639.9" text-anchor="middle" font-size="11.400" fill="#6a6a6a" letter-spacing=".25" textLength="62.02" lengthAdjust="spacing">2023年05月</text><path d="M852.7 621.5v4.500" stroke="#d6d7d9" stroke-width="1"/><text x="852.7" y="639.9" text-anchor="middle" font-size="11.400" fill="#6a6a6a" letter-spacing=".25" textLength="62.02" lengthAdjust="spacing">2023年06月</text><path d="M926.7 621.5v4.500" stroke="#d6d7d9" stroke-width="1"/><text x="926.7" y="639.9" text-anchor="middle" font-size="11.400" fill="#6a6a6a" letter-spacing=".25" textLength="62.02" lengthAdjust="spacing">2023年07月</text><path d="M1000.7 621.5v4.500" stroke="#d6d7d9" stroke-width="1"/><text x="1000.7" y="639.9" text-anchor="middle" font-size="11.400" fill="#6a6a6a" letter-spacing=".25" textLength="62.02" lengthAdjust="spacing">2023年08月</text><path d="M1074.7 621.5v4.500" stroke="#d6d7d9" stroke-width="1"/><text x="1074.7" y="639.9" text-anchor="middle" font-size="11.400" fill="#6a6a6a" letter-spacing=".25" textLength="62.02" lengthAdjust="spacing">2023年09月</text><path d="M1148.7 621.5v4.500" stroke="#d6d7d9" stroke-width="1"/><text x="1148.7" y="639.9" text-anchor="middle" font-size="11.400" fill="#6a6a6a" letter-spacing=".25" textLength="62.02" lengthAdjust="spacing">2023年10月</text><path d="M926.7 474.5V621.5" stroke="#8a8a8a" stroke-width="1"/><path d="M778.70 533.30 C778.70 533.30 828.52 533.30 852.70 533.30 C877.36 530.85 902.28 518.60 926.70 518.60 C951.12 518.60 976.28 533.30 1000.70 533.30 C1025.12 533.30 1050.94 525.68 1074.70 518.60 C1099.78 511.13 1148.70 489.20 1148.70 489.20" stroke="#df7b37" stroke-width="2.6" fill="none" stroke-linejoin="round"/><circle cx="778.7" cy="533.3" r="1.700" fill="#e8935a" stroke="#df7b37" stroke-width=".9"/><text x="781.7" y="527.3" text-anchor="middle" font-size="11.400" fill="#6a6a6a" letter-spacing=".3">6</text><circle cx="852.7" cy="533.3" r="1.700" fill="#e8935a" stroke="#df7b37" stroke-width=".9"/><text x="852.7" y="527.3" text-anchor="middle" font-size="11.400" fill="#6a6a6a" letter-spacing=".3">6</text><circle cx="926.7" cy="518.6" r="3.200" fill="#e9a877" stroke="#df7b37" stroke-width="1.300"/><text x="926.7" y="510.1" text-anchor="middle" font-size="11.400" fill="#6a6a6a" letter-spacing=".3">7</text><circle cx="1000.7" cy="533.3" r="1.700" fill="#e8935a" stroke="#df7b37" stroke-width=".9"/><text x="1000.7" y="527.3" text-anchor="middle" font-size="11.400" fill="#6a6a6a" letter-spacing=".3">6</text><circle cx="1074.7" cy="518.6" r="1.700" fill="#e8935a" stroke="#df7b37" stroke-width=".9"/><text x="1074.7" y="512.6" text-anchor="middle" font-size="11.400" fill="#6a6a6a" letter-spacing=".3">7</text><circle cx="1148.7" cy="489.2" r="1.700" fill="#e8935a" stroke="#df7b37" stroke-width=".9"/><text x="1145.7" y="497.2" text-anchor="middle" font-size="11.400" fill="#6a6a6a" letter-spacing=".3">9</text></svg>
<div class="abs" style="left:680.2px;top:520.300px;width:92px;height:50px;border-radius:2.500px;background:rgba(60,60,60,.72)"></div>
<div class="t" style="width:83.83px;left:684.5px;top:527.300px;font-size:14.800px;line-height:19px;height:19px;color:#fff;letter-spacing:.55px">2023年07月</div>
<div class="abs" style="left:684.7px;top:550.100px;width:10.500px;height:10.500px;border-radius:50%;background:#e58444"></div>
<div class="t" style="width:62.16px;left:700.0px;top:548.600px;font-size:12.200px;color:#fff;letter-spacing:.6px">任务数量:<b style="font-size:12.800px">7</b></div>
<div class="t" style="width:72.05px;left:27.5px;top:682px;font-size:12.200px;color:#20252e">生产计划明细</div>
<div class="abs" style="left:27.0px;top:708px;width:899.500px;height:30px;background:#c5d7f5"></div>
<div class="abs" style="left:118.5px;top:708px;width:1px;height:30px;background:#f3f6fc"></div>
<div class="abs" style="left:216.0px;top:708px;width:1px;height:30px;background:#f3f6fc"></div>
<div class="abs" style="left:335.5px;top:708px;width:1px;height:30px;background:#f3f6fc"></div>
<div class="abs" style="left:451.8px;top:708px;width:1px;height:30px;background:#f3f6fc"></div>
<div class="abs" style="left:556.3px;top:708px;width:1px;height:30px;background:#f3f6fc"></div>
<div class="abs" style="left:658.5px;top:708px;width:1px;height:30px;background:#f3f6fc"></div>
<div class="abs" style="left:926.0px;top:708px;width:9px;height:30px;background:#fff;border:1px solid #dfe7f7"></div>
<div class="abs" style="left:869.5px;top:715px;width:57px;height:16px;overflow:hidden;text-align:right;direction:ltr"><div class="t" style="width:55.05px;right:0;top:0;font-size:11.300px;color:#20252e;font-weight:bold">生产产品明</div></div>
</div>
</body></html>
